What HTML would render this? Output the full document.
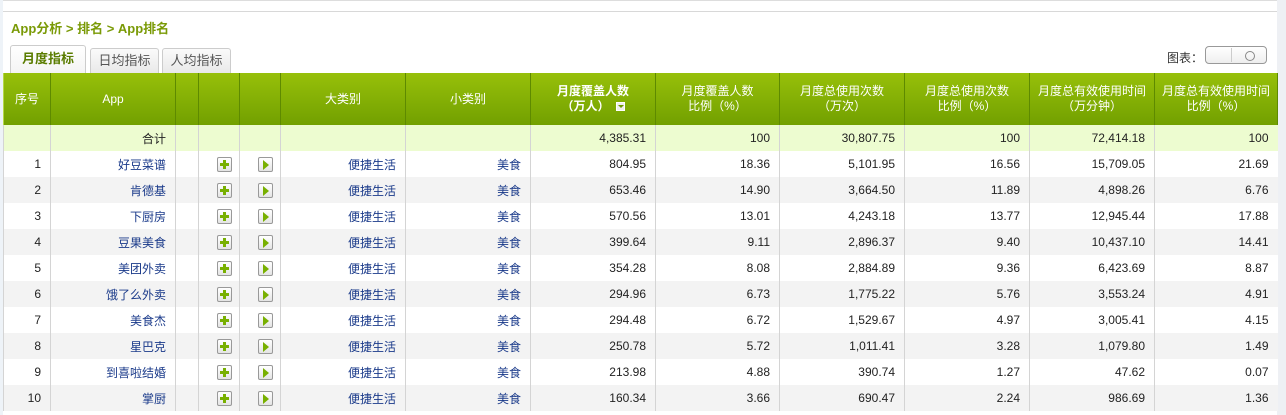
<!DOCTYPE html>
<html><head><meta charset="utf-8">
<style>
*{margin:0;padding:0;box-sizing:border-box}
body{width:1286px;height:415px;background:#fff;font-family:"Liberation Sans","Noto Sans CJK SC",sans-serif;font-size:12px;position:relative;overflow:hidden}
.ls{position:absolute;left:0;top:0;width:3px;height:415px;background:#eef3f8}
.rs{position:absolute;left:1277px;top:0;width:9px;height:415px;background:#eef0f4}
.l0{position:absolute;left:3px;top:0;width:1274px;height:1px;background:#ddd}
.l1{position:absolute;left:3px;top:11px;width:1274px;height:1px;background:#d8d8d8}
.bc{position:absolute;left:11px;top:18px;font-size:13px;font-weight:bold;color:#7a9a06}
.tab{position:absolute;height:27px;border:1px solid #ccc;border-bottom:none;background:linear-gradient(#fafafa,#e9e9e9);text-align:center;line-height:25px;font-size:13px;color:#555;border-radius:3px 3px 0 0}
.t1{left:10px;top:45px;width:76px;background:linear-gradient(#fff,#f4f4f4);color:#5a7c00;font-weight:bold;height:28px}
.t2{left:90px;top:48px;width:69px;height:25px;line-height:23px}
.t3{left:162px;top:48px;width:69px;height:25px;line-height:23px}
.tl{position:absolute;left:1167px;top:49px;font-size:12px;color:#333}
.sw{position:absolute;left:1205px;top:46px;width:62px;height:18px;border:1px solid #999;border-radius:4px;background:linear-gradient(#fff,#eee)}
.sw:before{content:"";position:absolute;left:25px;top:1px;width:1px;height:14px;background:#ccc}
.sw:after{content:"";position:absolute;left:39px;top:4px;width:8px;height:8px;border:1px solid #888;border-radius:50%}
table{position:absolute;left:3px;top:73px;border-collapse:collapse;table-layout:fixed;width:1274px}
th{height:52px;background:linear-gradient(#97c00a,#72a000);color:#fff;font-weight:normal;border-left:1px solid #b5d945;border-right:1px solid #5e8a00;text-align:center;font-size:12px;line-height:15px}
th.b{font-weight:bold}
td{height:26px;border-left:1px solid #d4d4d4;text-align:right;padding-right:9px;color:#222;font-size:12px}
tr.tot td{background:#edfcd0}
tr.w td{background:#fff}
tr.g td{background:#f3f3f3}
td.n{color:#1a3a8a}
td.c{text-align:right;padding-right:7px}
.ic{display:inline-block;width:15px;height:15px;border:1px solid #999;border-radius:2px;background:linear-gradient(#fff,#e4e4e4);position:relative;vertical-align:middle}
.p:before{content:"";position:absolute;left:2px;top:5px;width:9px;height:3px;background:#78b000}
.p:after{content:"";position:absolute;left:5px;top:2px;width:3px;height:9px;background:#78b000}
.pl:before{content:"";position:absolute;left:4px;top:2px;border-left:6px solid #78b000;border-top:5px solid transparent;border-bottom:5px solid transparent}
.dd{display:inline-block;width:9px;height:9px;background:#eee;border:1px solid #fff;vertical-align:middle;margin-left:6px;position:relative}
.dd:after{content:"";position:absolute;left:1px;top:2px;border-top:3px solid #6a9a00;border-left:3px solid transparent;border-right:3px solid transparent}
</style></head><body>
<div class="ls"></div><div class="rs"></div><div class="l0"></div><div class="l1"></div>
<div class="bc">App分析 &gt; 排名 &gt; App排名</div>
<div class="tab t1">月度指标</div><div class="tab t2">日均指标</div><div class="tab t3">人均指标</div>
<div class="tl">图表：</div><div class="sw"></div>
<table>
<colgroup><col style="width:47px"><col style="width:125px"><col style="width:23px"><col style="width:41px"><col style="width:41px"><col style="width:125px"><col style="width:125px"><col style="width:125px"><col style="width:124px"><col style="width:125px"><col style="width:125px"><col style="width:125px"><col style="width:123px"></colgroup>
<tr><th>序号</th><th>App</th><th></th><th></th><th></th><th>大类别</th><th>小类别</th><th class="b">月度覆盖人数<br>（万人）<span class="dd"></span></th><th>月度覆盖人数<br>比例（%）</th><th>月度总使用次数<br>（万次）</th><th>月度总使用次数<br>比例（%）</th><th>月度总有效使用时间<br>（万分钟）</th><th>月度总有效使用时间<br>比例（%）</th></tr>
<tr class="tot"><td></td><td>合计</td><td></td><td></td><td></td><td></td><td></td><td>4,385.31</td><td>100</td><td>30,807.75</td><td>100</td><td>72,414.18</td><td>100</td></tr>
<tr class="w"><td>1</td><td class="n">好豆菜谱</td><td></td><td class="c"><span class="ic p"></span></td><td class="c"><span class="ic pl"></span></td><td class="n">便捷生活</td><td class="n">美食</td><td>804.95</td><td>18.36</td><td>5,101.95</td><td>16.56</td><td>15,709.05</td><td>21.69</td></tr>
<tr class="g"><td>2</td><td class="n">肯德基</td><td></td><td class="c"><span class="ic p"></span></td><td class="c"><span class="ic pl"></span></td><td class="n">便捷生活</td><td class="n">美食</td><td>653.46</td><td>14.90</td><td>3,664.50</td><td>11.89</td><td>4,898.26</td><td>6.76</td></tr>
<tr class="w"><td>3</td><td class="n">下厨房</td><td></td><td class="c"><span class="ic p"></span></td><td class="c"><span class="ic pl"></span></td><td class="n">便捷生活</td><td class="n">美食</td><td>570.56</td><td>13.01</td><td>4,243.18</td><td>13.77</td><td>12,945.44</td><td>17.88</td></tr>
<tr class="g"><td>4</td><td class="n">豆果美食</td><td></td><td class="c"><span class="ic p"></span></td><td class="c"><span class="ic pl"></span></td><td class="n">便捷生活</td><td class="n">美食</td><td>399.64</td><td>9.11</td><td>2,896.37</td><td>9.40</td><td>10,437.10</td><td>14.41</td></tr>
<tr class="w"><td>5</td><td class="n">美团外卖</td><td></td><td class="c"><span class="ic p"></span></td><td class="c"><span class="ic pl"></span></td><td class="n">便捷生活</td><td class="n">美食</td><td>354.28</td><td>8.08</td><td>2,884.89</td><td>9.36</td><td>6,423.69</td><td>8.87</td></tr>
<tr class="g"><td>6</td><td class="n">饿了么外卖</td><td></td><td class="c"><span class="ic p"></span></td><td class="c"><span class="ic pl"></span></td><td class="n">便捷生活</td><td class="n">美食</td><td>294.96</td><td>6.73</td><td>1,775.22</td><td>5.76</td><td>3,553.24</td><td>4.91</td></tr>
<tr class="w"><td>7</td><td class="n">美食杰</td><td></td><td class="c"><span class="ic p"></span></td><td class="c"><span class="ic pl"></span></td><td class="n">便捷生活</td><td class="n">美食</td><td>294.48</td><td>6.72</td><td>1,529.67</td><td>4.97</td><td>3,005.41</td><td>4.15</td></tr>
<tr class="g"><td>8</td><td class="n">星巴克</td><td></td><td class="c"><span class="ic p"></span></td><td class="c"><span class="ic pl"></span></td><td class="n">便捷生活</td><td class="n">美食</td><td>250.78</td><td>5.72</td><td>1,011.41</td><td>3.28</td><td>1,079.80</td><td>1.49</td></tr>
<tr class="w"><td>9</td><td class="n">到喜啦结婚</td><td></td><td class="c"><span class="ic p"></span></td><td class="c"><span class="ic pl"></span></td><td class="n">便捷生活</td><td class="n">美食</td><td>213.98</td><td>4.88</td><td>390.74</td><td>1.27</td><td>47.62</td><td>0.07</td></tr>
<tr class="g"><td>10</td><td class="n">掌厨</td><td></td><td class="c"><span class="ic p"></span></td><td class="c"><span class="ic pl"></span></td><td class="n">便捷生活</td><td class="n">美食</td><td>160.34</td><td>3.66</td><td>690.47</td><td>2.24</td><td>986.69</td><td>1.36</td></tr>
</table>
</body></html>
